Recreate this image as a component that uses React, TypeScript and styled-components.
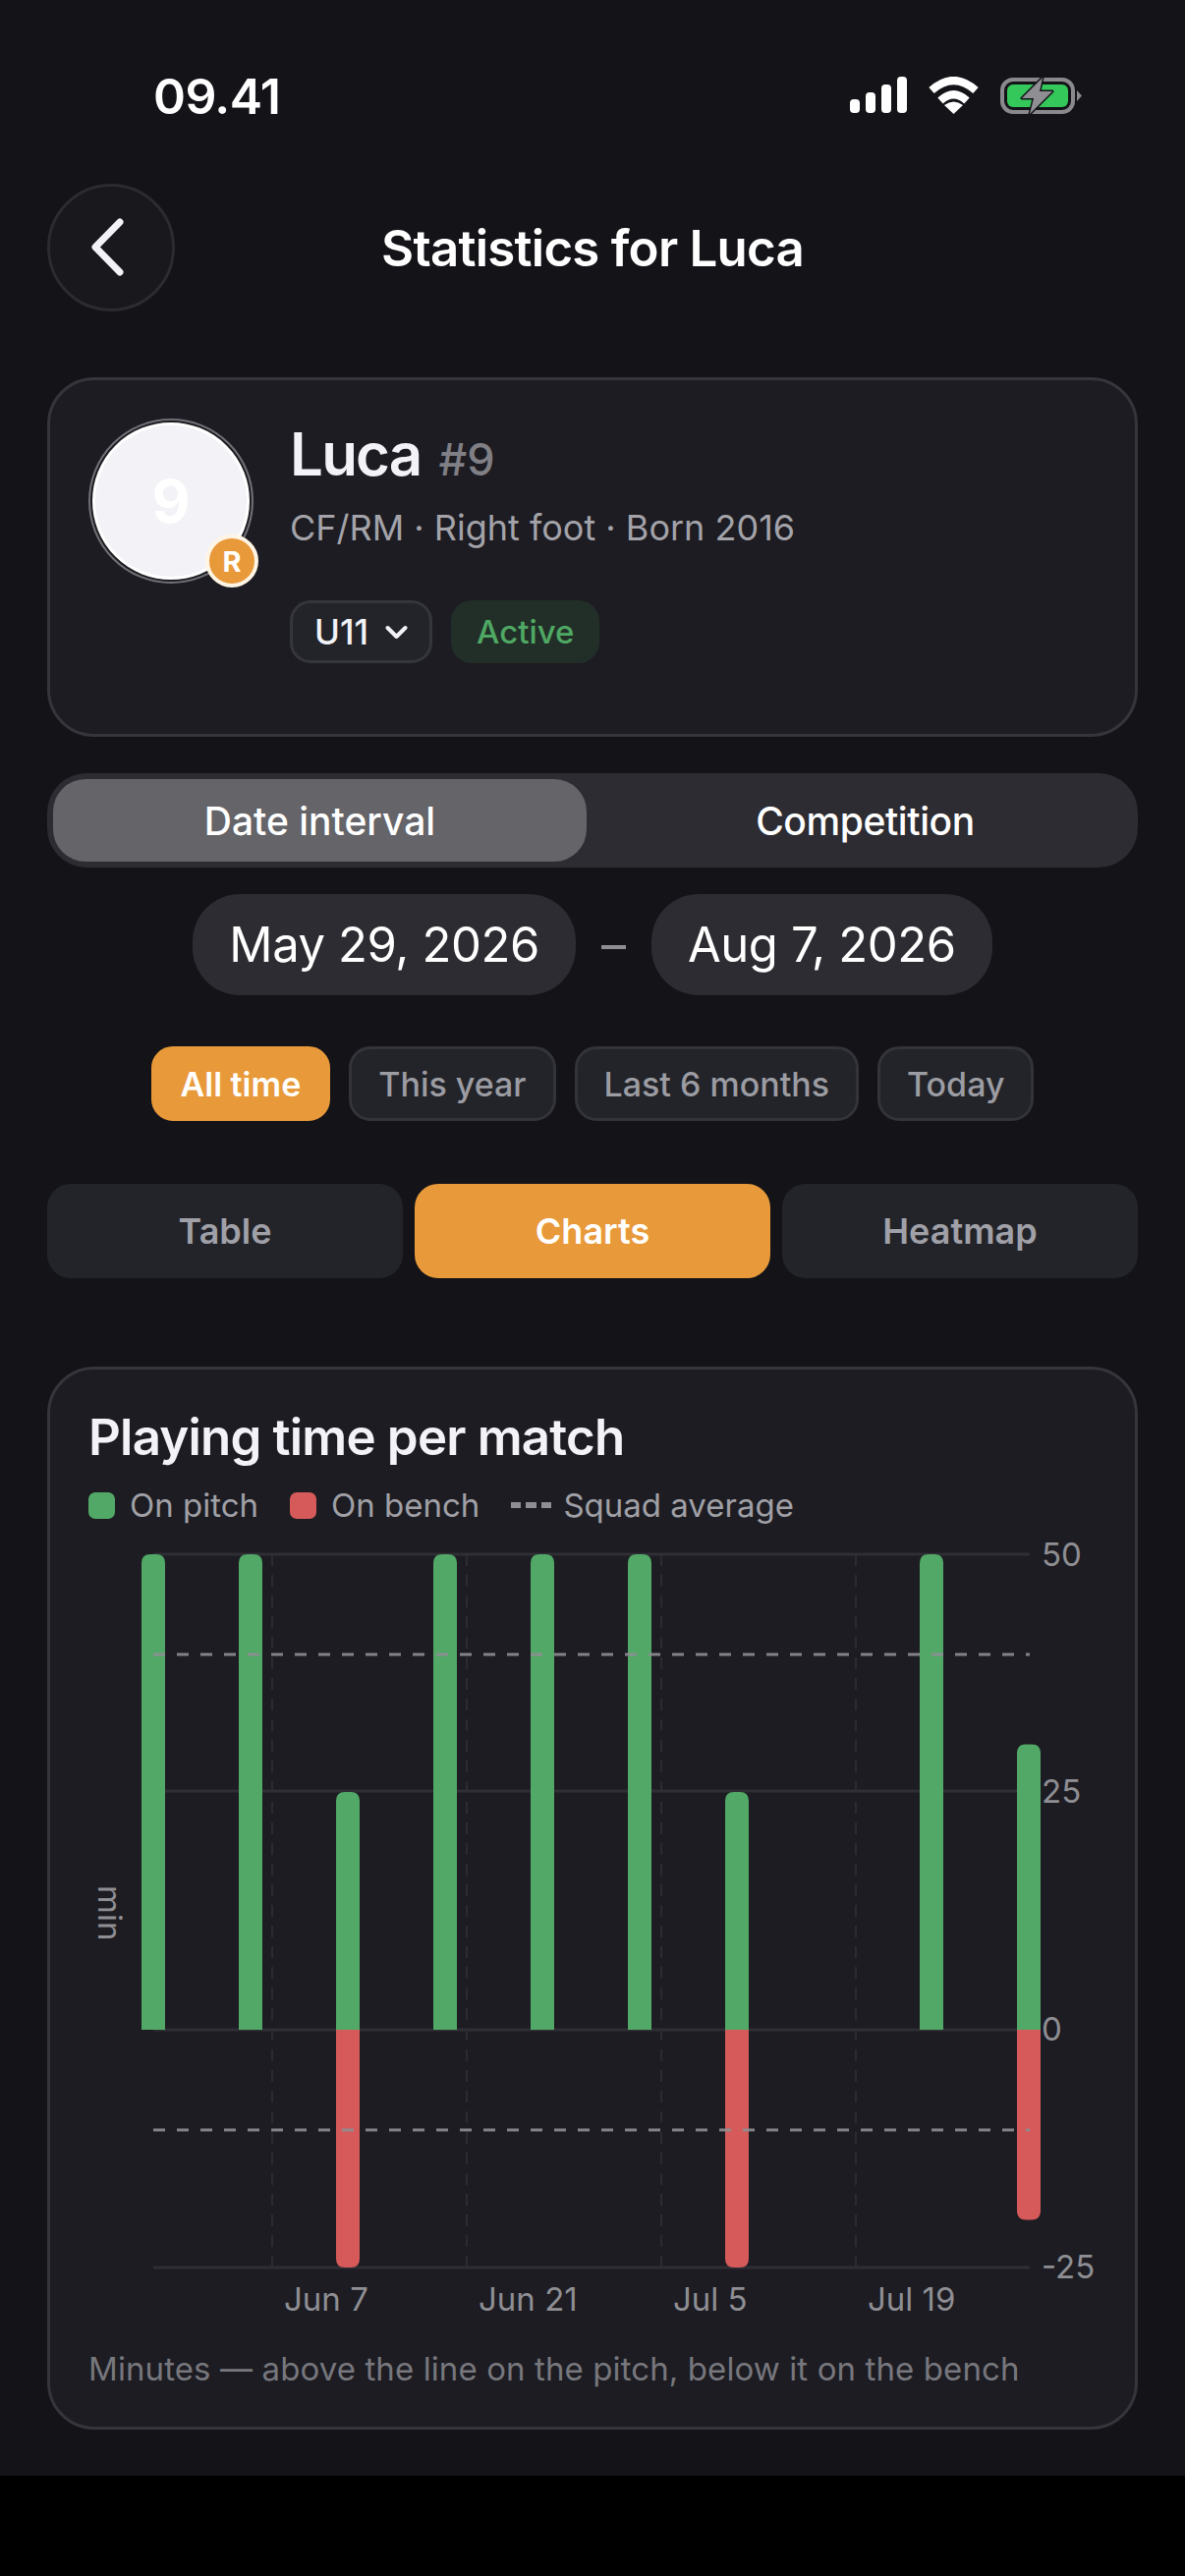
import React from "react";
import styled, { createGlobalStyle } from "styled-components";

const Global = createGlobalStyle`
  html, body { margin: 0; padding: 0; background: #000; }
  * { box-sizing: border-box; }
  #root { width: 1206px; }
`;

const Page = styled.main`
  width: 1206px;
  min-height: 2520px;
  background: #131318;
  font-family: Inter, "Liberation Sans", sans-serif;
  color: #f2f2f7;
`;

const StatusBar = styled.div`
  height: 186px;
  padding: 72px 105px 0 156px;
  display: flex;
  justify-content: space-between;
  align-items: flex-start;
`;
const Clock = styled.span`
  font-size: 50px;
  line-height: 52px;
  font-weight: 600;
  color: #fff;
  letter-spacing: -0.6px;
`;
const StatusIcons = styled.div`
  display: flex;
  align-items: flex-start;
  gap: 22px;
  padding-top: 6px;
`;

const Header = styled.header`
  display: grid;
  grid-template-columns: 130px 1fr 130px;
  align-items: center;
  padding: 0 48px;
  height: 131px;
`;
const BackButton = styled.button`
  width: 130px;
  height: 130px;
  border-radius: 50%;
  border: 3px solid #2b2b30;
  background: #19191d;
  padding: 0;
  display: flex;
  align-items: center;
  justify-content: center;
`;
const Title = styled.h1`
  margin: 2px 0 0;
  text-align: center;
  font-size: 51px;
  line-height: 60px;
  font-weight: 600;
  color: #fff;
  letter-spacing: -0.75px;
`;

const Content = styled.div`
  padding: 67px 48px 47px;
  display: flex;
  flex-direction: column;
`;
const Card = styled.section`
  background: #1c1c22;
  border: 3px solid #35353c;
  border-radius: 48px;
`;
const ProfileCard = styled(Card)`
  padding: 39px 39px 72px;
  display: flex;
  gap: 37px;
  align-items: flex-start;
`;
const Avatar = styled.div`
  position: relative;
  flex: none;
  width: 168px;
  height: 168px;
  border-radius: 50%;
  border: 2px solid #707076;
  padding: 2px;
`;
const AvatarFace = styled.div`
  width: 100%;
  height: 100%;
  border-radius: 50%;
  background: #f2f2f7;
  border: 3px solid #fff;
  color: #fff;
  font-size: 60px;
  font-weight: 700;
  display: flex;
  align-items: center;
  justify-content: center;
`;
const RoleBadge = styled.span`
  position: absolute;
  right: -7px;
  bottom: -6px;
  width: 54px;
  height: 54px;
  border-radius: 50%;
  background: #e8993a;
  border: 4px solid #fff5e4;
  color: #fff;
  font-size: 29px;
  font-weight: 700;
  display: flex;
  align-items: center;
  justify-content: center;
`;
const ProfileText = styled.div`
  display: flex;
  flex-direction: column;
  min-width: 0;
`;
const NameLine = styled.div`
  display: flex;
  align-items: baseline;
  gap: 18px;
  line-height: 72px;
`;
const Name = styled.span`
  font-size: 60px;
  font-weight: 600;
  color: #f2f2f7;
  letter-spacing: -1.8px;
`;
const PlayerNumber = styled.span`
  font-size: 45px;
  font-weight: 500;
  color: #7f7f85;
`;
const Meta = styled.div`
  margin-top: 9px;
  font-size: 36px;
  line-height: 48px;
  color: #a3a3a9;
  white-space: nowrap;
`;
const ChipRow = styled.div`
  margin-top: 50px;
  display: flex;
  gap: 19px;
`;
const TeamChip = styled.div`
  height: 64px;
  width: 145px;
  border-radius: 21px;
  border: 3px solid #35353c;
  background: #232429;
  font-size: 35px;
  font-weight: 500;
  color: #f2f2f7;
  display: flex;
  align-items: center;
  justify-content: center;
  gap: 17px;
`;
const StatusChip = styled.div`
  height: 64px;
  padding: 0 26px;
  border-radius: 21px;
  background: #222e28;
  font-size: 33px;
  font-weight: 500;
  color: #4fa863;
  display: flex;
  align-items: center;
`;

const Segmented = styled.div`
  margin-top: 37px;
  height: 96px;
  border-radius: 40px;
  background: #2c2c32;
  display: grid;
  grid-template-columns: 1fr 1fr;
`;
const Segment = styled.div<{ $active?: boolean }>`
  margin: 6px;
  border-radius: 33px;
  background: ${(p) => (p.$active ? "#646469" : "transparent")};
  color: #fff;
  font-size: 39px;
  font-weight: 500;
  letter-spacing: ${(p) => (p.$active ? "0" : "-0.4px")};
  display: flex;
  align-items: center;
  justify-content: center;
`;

const DateRow = styled.div`
  margin-top: 27px;
  display: flex;
  justify-content: center;
  align-items: center;
  gap: 25px;
`;
const DatePill = styled.div`
  height: 103px;
  padding: 0 37px;
  border-radius: 48px;
  background: #2c2c32;
  color: #fff;
  font-size: 49px;
  display: flex;
  align-items: center;
  letter-spacing: -0.4px;
`;
const DateDash = styled.span`
  width: 27px;
  text-align: center;
  font-size: 50px;
  color: #8e8e93;
`;

const PresetRow = styled.div`
  margin-top: 52px;
  display: flex;
  justify-content: center;
  gap: 19px;
`;
const Preset = styled.div<{ $active?: boolean }>`
  height: 76px;
  padding: 0 27px;
  border-radius: 22px;
  border: 3px solid ${(p) => (p.$active ? "#e8993a" : "#33343a")};
  background: ${(p) => (p.$active ? "#e8993a" : "#232429")};
  color: ${(p) => (p.$active ? "#fff" : "#9c9ca3")};
  font-size: 34px;
  font-weight: ${(p) => (p.$active ? 600 : 500)};
  display: flex;
  align-items: center;
`;

const TabRow = styled.div`
  margin-top: 64px;
  display: grid;
  grid-template-columns: repeat(3, 1fr);
  gap: 12px;
`;
const Tab = styled.div<{ $active?: boolean }>`
  height: 96px;
  border-radius: 24px;
  background: ${(p) => (p.$active ? "#e8993a" : "#232429")};
  color: ${(p) => (p.$active ? "#fff" : "#a0a0a8")};
  font-size: 36px;
  font-weight: 600;
  display: flex;
  align-items: center;
  justify-content: center;
`;

const ChartCard = styled(Card)`
  margin-top: 90px;
  padding: 39px;
`;
const ChartTitle = styled.h2`
  margin: 0;
  font-size: 51px;
  line-height: 60px;
  font-weight: 600;
  color: #f2f2f7;
  letter-spacing: -0.8px;
`;
const Legend = styled.div`
  margin-top: 21px;
  height: 36px;
  display: flex;
  align-items: center;
  gap: 32px;
`;
const LegendItem = styled.div<{ $gap?: number }>`
  display: flex;
  align-items: center;
  gap: ${(p) => p.$gap ?? 15}px;
  font-size: 33px;
  color: #a0a0a6;
`;
const Swatch = styled.span<{ $color: string }>`
  width: 27px;
  height: 27px;
  border-radius: 7px;
  background: ${(p) => p.$color};
`;
const DashSwatch = styled.span`
  width: 41px;
  height: 6px;
  background: repeating-linear-gradient(90deg, #8e8e93 0 10px, transparent 10px 15.5px);
`;
const ChartSvg = styled.svg`
  display: block;
  width: 1026px;
  height: 841px;
`;
const Footnote = styled.p`
  margin: 0;
  font-size: 33px;
  line-height: 40px;
  color: #77777d;
  white-space: nowrap;
  letter-spacing: 0.1px;
`;

const GREEN = "#52a866";
const RED = "#d65a5a";
const ZERO = 2066;
const UNIT = 9.68;
const BAR_W = 24;
const R = 9;

const bars: { x: number; on: number; off: number }[] = [
  { x: 144, on: 50, off: 0 },
  { x: 243, on: 50, off: 0 },
  { x: 342, on: 25, off: 25 },
  { x: 441, on: 50, off: 0 },
  { x: 540, on: 50, off: 0 },
  { x: 639, on: 50, off: 0 },
  { x: 738, on: 25, off: 25 },
  { x: 936, on: 50, off: 0 },
  { x: 1035, on: 30, off: 20 },
];

const upBar = (x: number, v: number) => {
  const top = ZERO - v * UNIT;
  return `M${x} ${ZERO}V${top + R}Q${x} ${top} ${x + R} ${top}H${x + BAR_W - R}Q${x + BAR_W} ${top} ${x + BAR_W} ${top + R}V${ZERO}Z`;
};
const downBar = (x: number, v: number) => {
  const bot = ZERO + v * UNIT;
  return `M${x} ${ZERO}V${bot - R}Q${x} ${bot} ${x + R} ${bot}H${x + BAR_W - R}Q${x + BAR_W} ${bot} ${x + BAR_W} ${bot - R}V${ZERO}Z`;
};

const axisY = [
  { label: "50", y: 1582, base: 1594 },
  { label: "25", y: 1823, base: 1835 },
  { label: "0", y: 2066, base: 2077 },
  { label: "-25", y: 2308, base: 2319 },
];
const axisX = [
  { label: "Jun 7", x: 277 },
  { label: "Jun 21", x: 475 },
  { label: "Jul 5", x: 673 },
  { label: "Jul 19", x: 871 },
];

const Chart = () => (
  <ChartSvg viewBox="90 1550 1026 841" fontFamily="Inter, 'Liberation Sans', sans-serif" fontSize={33}>
    {axisX.map((t) => (
      <line key={t.label} x1={t.x} x2={t.x} y1={1582} y2={2308} stroke="#303036" strokeWidth={1.5} strokeDasharray="12 9" />
    ))}
    {axisY.map((t) => (
      <line key={t.label} x1={156} x2={1048} y1={t.y} y2={t.y} stroke="#2e2e34" strokeWidth={3} />
    ))}
    {bars.map((b) => (
      <g key={b.x}>
        <path d={upBar(b.x, b.on)} fill={GREEN} />
        {b.off > 0 && <path d={downBar(b.x, b.off)} fill={RED} />}
      </g>
    ))}
    {[1684, 2168].map((y) => (
      <line key={y} x1={156} x2={1048} y1={y} y2={y} stroke="#8e8e93" strokeOpacity={0.9} strokeWidth={3} strokeDasharray="12 12" />
    ))}
    {axisY.map((t) => (
      <text key={t.label} x={1060} y={t.base} fill="#8e8e93">{t.label}</text>
    ))}
    {axisX.map((t) => (
      <text key={t.label} x={t.x + 12} y={2352} fill="#8e8e93">{t.label}</text>
    ))}
    <text transform="translate(100 1919) rotate(90)" fill="#8e8e93" fontSize={33} letterSpacing={0}>min</text>
  </ChartSvg>
);

const SignalIcon = () => (
  <svg width="58" height="37" viewBox="0 0 58 37">
    <rect x="0" y="23" width="10" height="14" rx="4" fill="#fff" />
    <rect x="16" y="16" width="10" height="21" rx="4" fill="#fff" />
    <rect x="32" y="8" width="10" height="29" rx="4" fill="#fff" />
    <rect x="48" y="0" width="10" height="37" rx="4" fill="#fff" />
  </svg>
);
const WifiIcon = () => (
  <svg width="51" height="38" viewBox="0 0 51 38">
    <path d="M3 14Q25.5 -6 48 14" fill="none" stroke="#fff" strokeWidth="8" />
    <path d="M12 24.5Q25.5 12 39 24.5" fill="none" stroke="#fff" strokeWidth="8" />
    <path d="M25.5 38L16 29Q25.5 22 35 29Z" fill="#fff" />
  </svg>
);
const BatteryIcon = () => (
  <svg width="83" height="39" viewBox="0 0 83 39">
    <rect x="2" y="3" width="72" height="33" rx="11" fill="none" stroke="#8a8a8e" strokeWidth="4" />
    <rect x="7" y="8" width="62" height="23" rx="6" fill="#34c759" />
    <path d="M78 14L83 19.5L78 25Z" fill="#8a8a8e" />
    <path d="M43 1L22 22H34L30 38L53 15H40Z" fill="#8e8e93" stroke="#131318" strokeWidth="3" strokeLinejoin="round" paintOrder="stroke" />
  </svg>
);
const BackIcon = () => (
  <svg width="37" height="63" viewBox="0 0 37 63" style={{ marginRight: 7 }}>
    <path d="M31 6L6 31.5L31 57" fill="none" stroke="#f2f2f7" strokeWidth="7" strokeLinecap="round" strokeLinejoin="round" />
  </svg>
);
const ChevronIcon = () => (
  <svg width="23" height="15" viewBox="0 0 23 15">
    <path d="M2.5 3L11.5 12L20.5 3" fill="none" stroke="#f2f2f7" strokeWidth="4" strokeLinecap="round" strokeLinejoin="round" />
  </svg>
);

export default function App() {
  return (
    <>
      <Global />
      <Page>
        <StatusBar>
          <Clock>09.41</Clock>
          <StatusIcons>
            <SignalIcon />
            <WifiIcon />
            <BatteryIcon />
          </StatusIcons>
        </StatusBar>
        <Header>
          <BackButton aria-label="Back"><BackIcon /></BackButton>
          <Title>Statistics for Luca</Title>
        </Header>
        <Content>
          <ProfileCard>
            <Avatar>
              <AvatarFace>9</AvatarFace>
              <RoleBadge>R</RoleBadge>
            </Avatar>
            <ProfileText>
              <NameLine>
                <Name>Luca</Name>
                <PlayerNumber>#9</PlayerNumber>
              </NameLine>
              <Meta>CF/RM · Right foot · Born 2016</Meta>
              <ChipRow>
                <TeamChip>U11<ChevronIcon /></TeamChip>
                <StatusChip>Active</StatusChip>
              </ChipRow>
            </ProfileText>
          </ProfileCard>

          <Segmented>
            <Segment $active>Date interval</Segment>
            <Segment>Competition</Segment>
          </Segmented>

          <DateRow>
            <DatePill>May 29, 2026</DatePill>
            <DateDash>–</DateDash>
            <DatePill>Aug 7, 2026</DatePill>
          </DateRow>

          <PresetRow>
            <Preset $active>All time</Preset>
            <Preset>This year</Preset>
            <Preset>Last 6 months</Preset>
            <Preset>Today</Preset>
          </PresetRow>

          <TabRow>
            <Tab>Table</Tab>
            <Tab $active>Charts</Tab>
            <Tab>Heatmap</Tab>
          </TabRow>

          <ChartCard>
            <ChartTitle>Playing time per match</ChartTitle>
            <Legend>
              <LegendItem><Swatch $color={GREEN} />On pitch</LegendItem>
              <LegendItem><Swatch $color={RED} />On bench</LegendItem>
              <LegendItem $gap={12}><DashSwatch />Squad average</LegendItem>
            </Legend>
            <Chart />
            <Footnote>Minutes — above the line on the pitch, below it on the bench</Footnote>
          </ChartCard>
        </Content>
      </Page>
    </>
  );
}
